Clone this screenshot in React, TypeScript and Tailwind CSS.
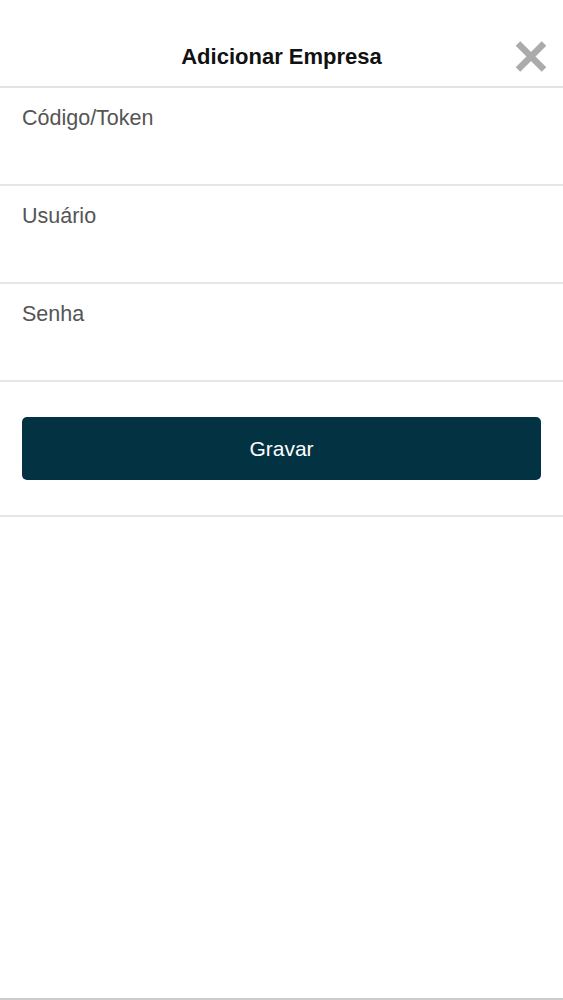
import { useState } from "react";

const fields = ["Código/Token", "Usuário", "Senha"];

const CloseIcon = () => (
  <svg width="32" height="33" viewBox="0 0 32 33" fill="none">
    <path d="M3 3.5 L29 29.5 M29 3.5 L3 29.5" stroke="#ababab" strokeWidth="6.5" strokeLinecap="butt" />
  </svg>
);

const App = () => {
  const [values, setValues] = useState<Record<string, string>>({});

  return (
    <div
      className="flex flex-col h-[1000px] bg-white"
      style={{ fontFamily: '"Liberation Sans", Arial, sans-serif' }}
    >
      {/* Header */}
      <header className="relative h-[88px] shrink-0 flex justify-center pt-[45px] border-b-2 border-[#e2e2e2]">
        <h1 className="text-[22px] font-bold text-[#111] leading-[24px]">Adicionar Empresa</h1>
        <button className="absolute right-[16px] top-[40px]">
          <CloseIcon />
        </button>
      </header>

      {/* Fields */}
      {fields.map((label) => (
        <div key={label} className="h-[98px] shrink-0 border-b-2 border-[#e6e6e6] px-[22px] pt-[17px]">
          <input
            type={label === "Senha" ? "password" : "text"}
            placeholder={label}
            value={values[label] ?? ""}
            onChange={(e) => setValues({ ...values, [label]: e.target.value })}
            className="w-full text-[21.5px] leading-[26px] text-[#4a4a4a] placeholder:text-[#555555] outline-none bg-transparent"
          />
        </div>
      ))}

      {/* Save */}
      <div className="shrink-0 px-[22px] pt-[35px] pb-[35px] border-b-2 border-[#e6e6e6]">
        <button className="w-full h-[63px] rounded-[5px] bg-[#033242] text-white text-[21px]">
          Gravar
        </button>
      </div>

      <div className="flex-1 border-b-2 border-[#cccccc]" />
    </div>
  );
};

export default App;
